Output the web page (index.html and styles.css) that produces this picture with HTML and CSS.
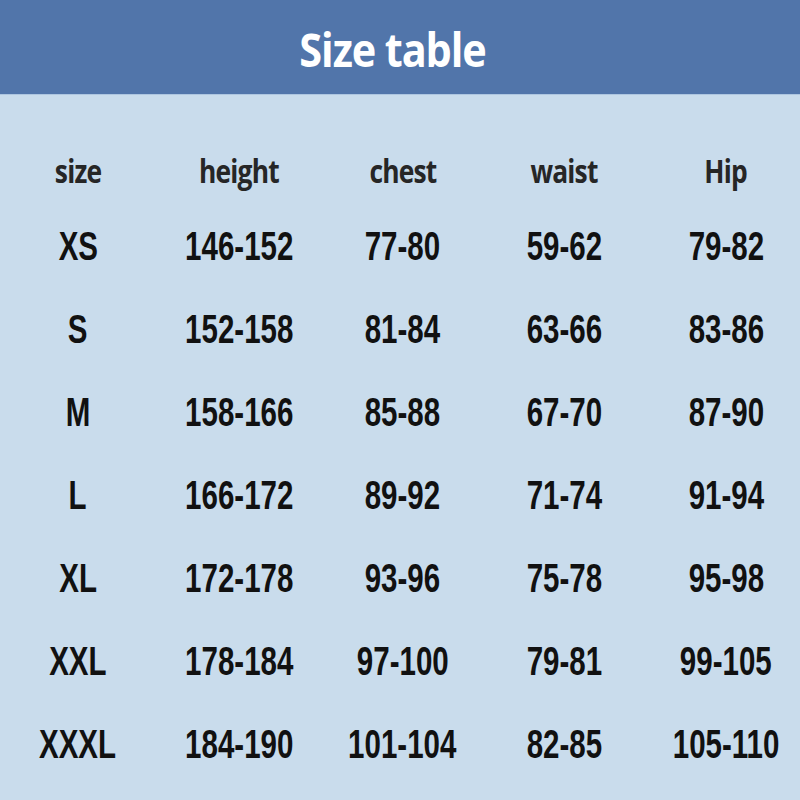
FILE: index.html
```html
<!DOCTYPE html>
<html>
<head>
<meta charset="utf-8">
<link rel="stylesheet" href="styles.css">
</head>
<body>
<div class="page">
  <header class="banner"><h1 class="title">Size table</h1></header>
  <div class="table">
    <div class="row head"><span>size</span><span>height</span><span>chest</span><span>waist</span><span>Hip</span></div>
    <div class="row"><span>XS</span><span>146-152</span><span>77-80</span><span>59-62</span><span>79-82</span></div>
    <div class="row"><span>S</span><span>152-158</span><span>81-84</span><span>63-66</span><span>83-86</span></div>
    <div class="row"><span>M</span><span>158-166</span><span>85-88</span><span>67-70</span><span>87-90</span></div>
    <div class="row"><span>L</span><span>166-172</span><span>89-92</span><span>71-74</span><span>91-94</span></div>
    <div class="row"><span>XL</span><span>172-178</span><span>93-96</span><span>75-78</span><span>95-98</span></div>
    <div class="row"><span>XXL</span><span>178-184</span><span>97-100</span><span>79-81</span><span>99-105</span></div>
    <div class="row"><span>XXXL</span><span>184-190</span><span>101-104</span><span>82-85</span><span>105-110</span></div>
  </div>
</div>
</body>
</html>
```
FILE: styles.css
```css
html, body { margin: 0; padding: 0; }
body { background: #c9dcec; }
.page { width: 800px; height: 800px; background: #c9dcec; overflow: hidden; }
.banner {
  height: 95px;
  background: #5175aa;
  display: flex;
  align-items: center;
  justify-content: center;
  border-bottom: 1px solid #aec6e0;
  box-sizing: border-box;
}
.title {
  margin: 0 15px 0 0;
  padding-top: 4px;
  color: #ffffff;
  font-family: "Open Sans", "Liberation Sans", sans-serif;
  font-weight: 700;
  font-size: 46px;
  letter-spacing: -1.2px;
  line-height: 1;
  transform: scaleX(0.9);
}
.table { padding-top: 40px; }
.row {
  display: grid;
  grid-template-columns: 156px 166px 161px 162px 162px;
  height: 83px;
  align-items: center;
  justify-items: center;
  font-family: "Liberation Sans", sans-serif;
  font-weight: 700;
  font-size: 41px;
  color: #111111;
}
.row span {
  display: inline-block;
  line-height: 1;
  white-space: nowrap;
  transform: scaleX(0.72);
}
.row.head {
  height: 70px;
  font-family: "Open Sans", "Liberation Sans", sans-serif;
  font-size: 33px;
  letter-spacing: -1px;
  color: #262626;
}
.row.head span { transform: scaleX(0.8); }
```
